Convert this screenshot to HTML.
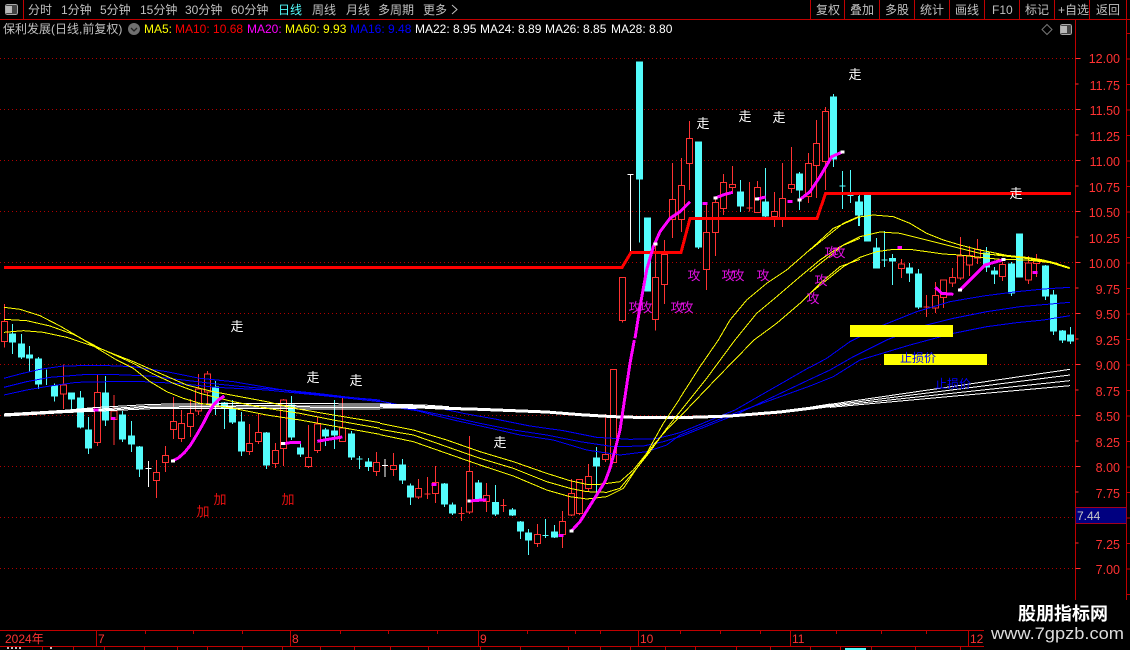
<!DOCTYPE html>
<html><head><meta charset="utf-8"><style>
html,body{margin:0;padding:0;background:#000;width:1130px;height:650px;overflow:hidden}
svg{display:block}
text{font-family:"Liberation Sans","WenQuanYi Zen Hei","Noto Sans CJK SC",sans-serif}
.t{font-size:12px;fill:#c0c0c0}
.ax{font-size:12.5px;fill:#ff3232;text-anchor:end}
.m{font-size:13px;text-anchor:middle}
.s{font-size:12px;text-anchor:middle}
</style></head><body>
<svg width="1130" height="650" viewBox="0 0 1130 650" xmlns="http://www.w3.org/2000/svg">
<rect width="1130" height="650" fill="#000"/>
<g shape-rendering="crispEdges">
<!-- grid -->
<path d="M0 58.5H1076M0 109.5H1076M0 160.5H1076M0 211.5H1076M0 262.5H1076M0 313.5H1076M0 364.5H1076M0 415.5H1076M0 466.5H1076M0 517.5H1076M0 568.5H1076" stroke="#b00000" stroke-dasharray="1 3" fill="none"/>
<!-- frame -->
<path d="M0 19.5H1130M23.5 0V19M810.5 0V19M844.5 0V19M879.5 0V19M914.5 0V19M949.5 0V19M984.5 0V19M1019.5 0V19M1054.5 0V19M1089.5 0V19M1126.5 0V650M1075.5 19V631M0 630.5H1076M0 646.5H1076" stroke="#c00000" fill="none"/>
<line x1="1078" y1="58" x2="1078" y2="570" stroke="#ff3232" stroke-width="5" stroke-dasharray="1 50"/>
<line x1="1077" y1="58" x2="1077" y2="570" stroke="#ff3232" stroke-width="3" stroke-dasharray="1 24.5"/>
<line x1="1128" y1="33" x2="1128" y2="600" stroke="#c00000" stroke-width="4" stroke-dasharray="1 24.5"/>
<path d="M96.5 631V646M290.5 631V646M478.5 631V646M638.5 631V646M790.5 631V646M968.5 631V646" stroke="#c00000"/>
<path d="M145.5 631V634M193.5 631V634M242.5 631V634M340.5 631V634M388.5 631V634M437.5 631V634M527.5 631V634M575.5 631V634M600.5 631V634M680.5 631V634M720.5 631V634M760.5 631V634M836.5 631V634M881.5 631V634M926.5 631V634" stroke="#c00000"/>
<path d="M42.5 646V650M73.5 646V650M104.5 646V650M144.5 646V650M177.5 646V650M207.5 646V650M242.5 646V650M282.5 646V650M320.5 646V650M354.5 646V650M390.5 646V650M428.5 646V650M480.5 646V650M520.5 646V650M568.5 646V650M600.5 646V650M630.5 646V650M665.5 646V650M695.5 646V650M736.5 646V650M770.5 646V650M810.5 646V650M840.5 646V650M871.5 646V650M915.5 646V650M960.5 646V650" stroke="#c00000"/>
<path d="M7 648H21M50 648H52" stroke="#c0c0c0" stroke-width="2" stroke-dasharray="2 2"/>
<rect x="845" y="648" width="21" height="2" fill="#54fcfc"/>

<!-- candles A -->
<g transform="translate(0 300) scale(.33333)" stroke-width="3">
<path fill="#000" stroke="#ff3232" d="M13 12V64M13 124V143M4 64H22V124H4ZM190 193V255M190 282V327M181 255H199V282H181ZM292 225V277M292 428V438M283 277H301V428H283ZM342 285V333M342 359V435M333 333H351V359H333ZM469 480V517M469 542V594M460 517H478V542H460ZM496 438V466M496 488V516M487 466H505V488H487ZM520 291V364M520 388V417M511 364H529V388H511ZM544 330V370M544 416V426M535 370H553V416H535ZM571 297V340M571 380V411M562 340H580V380H562ZM596 222V267M596 333V345M587 267H605V333H587ZM622 213V222M622 276V315M613 222H631V276H613ZM748 372V430M748 455V465M739 430H757V455H739ZM775 339V397M775 425V432M766 397H784V425H766ZM826 429V451M826 491V504M817 451H835V491H817ZM850 297V300M850 445V498M841 300H859V445H841ZM925 375V472M925 500V504M916 472H934V500H916ZM952 351V372M952 452V459M943 372H961V452H943ZM1027 294V384M1018 384H1036V425H1018ZM1129 456V487M1129 515V528M1120 487H1138V515H1120Z"/>
<path fill="#54fcfc" stroke="#54fcfc" d="M38 72V162M29 102H47V126H29ZM64 102V177M55 132H73V171H55ZM88 138V216M79 165H97V174H79ZM115 171V267M106 177H124V252H106ZM139 208V255M130 237H130ZM164 250V305M155 258H173V288H155ZM215 277V330M206 279H224V297H206ZM241 273V385M232 294H250V381H232ZM265 351V462M256 390H274V444H256ZM316 228V378M307 279H325V360H307ZM367 333V426M358 345H376V417H358ZM394 363V456M385 408H403V432H385ZM418 438V531M409 441H427V507H409ZM647 243V345M638 261H656V315H638ZM673 306V387M664 309H682V325H664ZM697 300V372M688 327H706V366H688ZM724 336V468M715 366H733V453H715ZM799 396V507M790 399H808V495H790ZM874 288V420M865 315H883V411H865ZM901 432V471M892 444H910V462H892ZM976 384V438M967 390H985V408H967ZM1003 300V447M994 393H1012V405H994ZM1054 393V480M1045 402H1063V471H1045ZM1078 468V507M1069 477H1087ZM1105 474V513M1096 486H1114V500H1096Z"/>
<path fill="none" stroke="#fff" d="M445 483V561M436 505H454"/>
</g>
<!-- candles B -->
<g transform="translate(380 340) scale(.33333)" stroke-width="3">
<path fill="none" stroke="#fff" d="M15 357V411M6 376H24"/>
<path fill="#000" stroke="#ff3232" d="M40 339V376M40 388V408M31 376H49V388H31ZM115 417V445M115 471V477M106 445H124V471H106ZM142 411V477M133 462H151ZM166 378V427M166 461V489M157 427H175V461H157ZM244 501V543M235 521H253ZM268 288V394M268 516V522M259 394H277V516H259ZM319 429V466M319 485V516M310 466H328V485H310ZM370 477V516M361 497H379ZM472 552V583M472 611V621M463 583H481V611H463ZM547 513V544M547 584V624M538 544H556V584H538ZM574 417V460M574 525V528M565 460H583V525H565ZM598 417V418M598 521V525M589 418H607V521H589ZM625 372V409M625 445V453M616 409H634V445H616ZM676 222V343M676 359V366M667 343H685V359H667ZM700 88V88M700 367V369M691 88H709V367H691Z"/>
<path fill="#54fcfc" stroke="#54fcfc" d="M67 357V432M58 375H76V420H58ZM91 430V495M82 438H100V471H82ZM193 429V501M184 432H202V492H184ZM217 487V525M208 495H226V519H208ZM295 420V483M286 429H304V480H286ZM346 435V528M337 487H355V522H337ZM397 504V528M388 510H406V525H388ZM421 543V597M412 546H430V573H412ZM445 567V645M436 579H454V600H436ZM496 537V594M487 586H505ZM523 555V594M514 576H532V591H514ZM649 321V460M640 354H658V378H640Z"/>
</g>
<!-- candles C -->
<g transform="translate(600 50) scale(.33333)" stroke-width="3">
<path fill="#000" stroke="#ff3232" d="M67 812V818M58 682H76V812H58ZM166 575V682M166 809V842M157 682H175V809H157ZM193 570V613M193 704V762M184 613H202V704H184ZM217 339V448M217 509V564M208 448H226V509H208ZM244 324V406M244 509V546M235 406H253V509H235ZM268 213V265M268 341V420M259 265H277V341H259ZM319 462V547M319 659V720M310 547H328V659H310ZM346 440V457M346 548V618M337 457H355V548H337ZM370 372V397M370 476V495M361 397H379V476H361ZM397 348V403M397 413V430M388 403H406V413H388ZM448 396V485M439 474H457ZM472 393V412M463 412H481V488H463ZM523 426V484M523 500V531M514 484H532V500H514ZM547 339V445M547 503V531M538 445H556V503H538ZM574 291V403M574 416V429M565 403H583V416H565ZM625 309V340M625 440V459M616 340H634V440H616ZM649 210V280M649 347V444M640 280H658V347H640ZM676 171V184M676 335V420M667 184H685V335H667Z"/>
<path fill="none" stroke="#fff" d="M92 372V607M82 373H100"/>
<path fill="#54fcfc" stroke="#54fcfc" d="M118 36V578M109 36H127V387H109ZM142 504V723M133 504H151V723H133ZM295 276V597M286 276H304V591H286ZM421 390V486M412 426H430V468H412ZM496 354V501M487 456H505V498H487ZM598 366V480M589 372H607V420H589ZM700 132V351M691 141H709V327H691ZM727 363V477M718 408H736ZM751 360V459M742 437H760ZM775 438V528M766 456H784V495H766Z"/>
</g>
<!-- candles D -->
<g transform="translate(810 170) scale(.33333)" stroke-width="3">
<path fill="#000" stroke="#ff3232" d="M274 267V282M274 296V324M265 282H283V296H265ZM349 375V441M340 411H358ZM376 336V376M376 414V429M367 376H385V414H367ZM400 330V330M400 382V414M391 330H409V382H391ZM427 294V322M427 339V351M418 322H436V339H418ZM451 201V258M451 324V330M442 258H460V324H442ZM478 228V256M478 285V318M469 256H487V285H469ZM502 207V238M502 264V282M493 238H511V264H493ZM577 276V283M577 320V333M568 283H586V320H568ZM655 258V279M655 330V342M646 279H664V330H646ZM679 252V267M679 280V321M670 267H688V280H670Z"/>
<path fill="#54fcfc" stroke="#54fcfc" d="M172 75V213M163 75H181V213H163ZM199 204V294M190 234H208V294H190ZM223 183V291M214 270H232ZM247 252V345M238 265H256V273H238ZM298 279V336M289 294H307V309H289ZM325 297V417M316 312H334V411H316ZM529 231V306M520 249H538V291H520ZM553 291V342M544 303H562V312H544ZM604 276V378M595 282H613V369H595ZM628 192V321M619 192H637V321H619ZM706 285V390M697 288H715V378H697ZM730 360V495M721 375H739V483H721ZM757 480V519M748 483H766V510H748ZM781 471V522M772 495H790V513H772Z"/>
<path d="M148 75V168M139 96H157V135H139Z" fill="#54fcfc" stroke="#54fcfc"/>
</g>

<!-- yellow and blue and white lines: left -->
<g transform="translate(0 300) scale(.33333)" fill="none" stroke-width="3">
<polyline stroke="#0000ff" points="12,235 60,222 120,208 190,198 300,196 400,200 500,215 600,235 700,245 800,262 900,278 1000,288 1140,300"/>
<polyline stroke="#0000ff" points="12,262 80,245 150,232 250,224 350,224 450,228 550,240 650,252 750,262 850,270 950,280 1050,292 1140,302"/>
<polyline stroke="#0000ff" points="12,285 80,270 150,258 230,247 330,245 430,245 530,250 650,262 800,270 900,280 1000,290 1140,305"/>
<polyline stroke="#fff" stroke-width="10" points="12,345 150,337 280,329"/>
<polyline stroke="#fff" points="12,344 150,335 280,323 456,313 800,310 1140,312"/>
<polyline stroke="#fff" points="12,345 150,336 280,328 456,318 800,317 1140,318"/>
<polyline stroke="#fff" points="12,346 150,338 280,331 456,322 800,321 1140,323"/>
<polyline stroke="#fff" points="12,348 150,340 280,334 456,326 800,326 1140,327"/>
<polyline stroke="#ffff00" points="12,22 60,28 120,47 180,78 240,113 300,150 350,180 400,205 450,245 500,275 550,295 600,310 700,325 800,345 900,360 1000,378 1140,403"/>
<polyline stroke="#ffff00" points="12,58 80,62 150,78 220,103 300,145 400,190 460,222 520,250 600,280 700,305 800,325 900,340 1000,360 1140,385"/>
<polyline stroke="#ffff00" points="12,97 70,92 130,97 200,112 290,142 400,185 480,220 560,255 640,275 720,290 800,305 900,328 1000,345 1140,368"/>
</g>
<g transform="translate(380 340) scale(.33333)" fill="none" stroke-width="3">
<polyline stroke="#0000ff" points="0,183 60,195 180,205 250,220 350,238 450,258 550,272 650,292 750,298 830,296 900,278"/>
<polyline stroke="#0000ff" points="0,190 100,208 200,228 300,250 400,270 500,285 600,305 700,320 790,318 850,305 900,290"/>
<polyline stroke="#0000ff" points="0,195 110,212 220,240 320,262 420,285 520,300 620,330 720,345 800,335 860,315 900,285"/>
<polyline stroke="#fff" points="0,192 130,195 207,200"/>
<polyline stroke="#fff" points="0,204 110,205"/>
<polyline stroke="#fff" stroke-width="9" points="0,197 100,200 200,205 300,208 400,212 500,216 600,224 700,230 800,233 900,233"/>
<polyline stroke="#ffff00" points="0,250 100,270 200,300 300,335 400,365 500,400 570,422 620,433 660,433 720,425 760,390 800,340 850,250 900,175"/>
<polyline stroke="#ffff00" points="0,268 100,285 200,320 300,355 400,385 500,425 570,445 620,455 680,457 720,445 770,385 810,335 860,265 900,215"/>
<polyline stroke="#ffff00" points="0,284 100,305 200,340 300,375 400,408 500,450 570,470 620,477 680,470 730,445 770,385 820,315 860,270 900,230"/>
</g>
<!-- bridge -->
<g fill="none">
<polyline stroke="#0000ff" points="680,432.7 735,410 810,367"/>
<polyline stroke="#0000ff" points="680,436.7 735,415 810,379.3"/>
<polyline stroke="#0000ff" points="680,435 735,413 810,386"/>
<polyline stroke="#fff" stroke-width="3" points="680,417.7 730,416 780,412 810,408.3 830,405"/>
</g>
<g transform="translate(600 50) scale(.33333)" fill="none" stroke="#ffff00" stroke-width="3">
<polyline points="240,1044 300,950 355,870 390,810 440,750 500,700 560,660 640,590 700,535 780,500"/>
<polyline points="240,1085 320,985 405,870 470,790 530,740 600,680 660,630 720,590 780,565"/>
<polyline points="240,1100 350,985 462,870 530,820 600,760 660,700 720,650 780,628"/>
</g>
<g transform="translate(810 170) scale(.33333)" fill="none" stroke-width="3">
<polyline stroke="#0000ff" points="0,592 50,565 120,515 220,465 320,425 420,395 520,378 620,365 700,357 780,352"/>
<polyline stroke="#0000ff" points="0,628 60,600 130,560 230,510 330,470 430,445 530,425 630,410 780,397"/>
<polyline stroke="#0000ff" points="0,648 70,620 150,570 300,525 430,490 530,470 620,458 700,450 780,437"/>
<polyline stroke="#fff" stroke-width="9" points="0,715 60,707"/>
<polyline stroke="#fff" points="60,703 780,598"/>
<polyline stroke="#fff" points="60,706 780,615"/>
<polyline stroke="#fff" points="60,709 780,632"/>
<polyline stroke="#fff" points="60,712 780,647"/>
<polyline stroke="#ffff00" points="0,240 50,200 100,160 140,142 190,135 250,140 300,160 350,190 400,210 450,225 500,238 550,248 600,258 650,262 700,270 740,280 780,295"/>
<polyline stroke="#ffff00" points="0,305 50,265 100,225 150,200 210,186 270,190 330,205 390,220 450,235 510,250 570,256 630,262 700,272 780,295"/>
<polyline stroke="#ffff00" points="0,370 50,330 100,290 150,262 200,245 250,238 300,238 350,245 400,252 450,255 510,262 570,268 650,270 720,278 780,295"/>
<polyline stroke="#ffff00" stroke-width="6" points="560,254 650,264 720,276 778,294"/>
</g>

<!-- thick red -->
<polyline fill="none" stroke="#ff0000" stroke-width="3" points="4,267.5 622,267.5 631,252.5 681,252.5 690,218.5 817,218.5 825.5,193.5 1071,193.5"/>

<!-- yellow bars -->
<rect x="850" y="325" width="103" height="12" fill="#ffff00"/>
<rect x="884" y="354" width="103" height="11" fill="#ffff00"/>

<!-- magenta -->
<g transform="translate(0 300) scale(.33333)" fill="none" stroke="#ff00ff" stroke-width="9">
<polyline points="517,483 535,474 553,458 571,436 590,405 610,370 625,340 640,316 655,300 673,288"/>
<polyline points="850,431 870,428 903,427"/>
<polyline points="952,424 985,418 1027,411"/>
<path d="M281 330H295M333 355H347"/>
<path d="M513 483H525M843 431H855" stroke="#fff"/>
</g>
<g transform="translate(380 340) scale(.33333)" fill="none" stroke="#ff00ff" stroke-width="9">
<polyline points="268,483 320,479"/>
<path d="M155 433H169M536 586H550"/>
<polyline points="574,573 600,545 625,505 650,465 675,425 690,385 705,330 720,270 735,170 750,70 763,0"/>
<path d="M568 573H580M262 483H272" stroke="#fff"/>
</g>
<g transform="translate(600 50) scale(.33333)" fill="none" stroke="#ff00ff" stroke-width="9">
<polyline points="105,865 120,770 140,660 160,590 180,545 210,505 240,485 270,455"/>
<polyline points="345,444 375,433 398,427"/>
<polyline points="470,447 497,441"/>
<polyline points="598,450 630,425 660,380 695,320 727,306"/>
<path d="M308 460H322M563 454H577"/>
<path d="M160 582H172M340 444H352M465 447H477M592 450H604M721 306H733" stroke="#fff"/>
</g>
<g transform="translate(810 170) scale(.33333)" fill="none" stroke="#ff00ff" stroke-width="9">
<path d="M263 232H276M668 307H682"/>
<polyline points="376,352 395,370 430,373"/>
<polyline points="450,360 490,320 525,285 580,269"/>
<path d="M444 360H456M574 269H586" stroke="#fff"/>
</g>

<!-- price box -->
<rect x="1075.5" y="507.5" width="51" height="16" fill="#000080" stroke="#a00020"/>
<!-- icons -->
<rect x="5.5" y="4.5" width="12" height="10" rx="2" fill="#444" stroke="#a8a8a8"/>
<rect x="6" y="6" width="6" height="7" fill="#b8b8b8"/>
<rect x="1060.5" y="24.5" width="11" height="10" rx="2" fill="#444" stroke="#a8a8a8"/>
<rect x="1061" y="26" width="6" height="7" fill="#b8b8b8"/>
</g>
<path d="M1047 24.5L1052 29.5L1047 34.5L1042 29.5Z" fill="none" stroke="#777"/>
<circle cx="134" cy="29" r="6" fill="#707070"/>
<path d="M131 28L134 31L137 28" fill="none" stroke="#222" stroke-width="1.3"/>
<path d="M452 5L457 9.5L452 14" fill="none" stroke="#c0c0c0"/>

<!-- toolbar text -->
<g class="t">
<text class="t" x="28" y="14">分时</text>
<text class="t" x="61" y="14">1分钟</text>
<text class="t" x="100" y="14">5分钟</text>
<text class="t" x="140" y="14">15分钟</text>
<text class="t" x="185" y="14">30分钟</text>
<text class="t" x="231" y="14">60分钟</text>
<text class="t" x="278" y="14" style="fill:#54fcfc">日线</text>
<text class="t" x="312" y="14">周线</text>
<text class="t" x="346" y="14">月线</text>
<text class="t" x="378" y="14">多周期</text>
<text class="t" x="423" y="14">更多</text>
<text class="t" x="816" y="14">复权</text>
<text class="t" x="850" y="14">叠加</text>
<text class="t" x="885" y="14">多股</text>
<text class="t" x="920" y="14">统计</text>
<text class="t" x="955" y="14">画线</text>
<text class="t" x="992" y="14">F10</text>
<text class="t" x="1025" y="14">标记</text>
<text class="t" x="1058" y="14">+自选</text>
<text class="t" x="1096" y="14">返回</text>
<text class="t" x="3" y="33">保利发展(日线,前复权)</text>
<text class="t" x="144" y="33" style="fill:#ffff00">MA5:</text>
<text class="t" x="175" y="33" style="fill:#ff0000">MA10: 10.68</text>
<text class="t" x="247" y="33" style="fill:#ff00ff">MA20:</text>
<text class="t" x="285" y="33" style="fill:#ffff00">MA60: 9.93</text>
<text class="t" x="350" y="33" style="fill:#0000ff">MA16: 9.48</text>
<text class="t" x="415" y="33" style="fill:#fff">MA22: 8.95</text>
<text class="t" x="480" y="33" style="fill:#fff">MA24: 8.89</text>
<text class="t" x="545" y="33" style="fill:#fff">MA26: 8.85</text>
<text class="t" x="611" y="33" style="fill:#fff">MA28: 8.80</text>
</g>

<!-- axis labels -->
<text class="ax" x="1120" y="63">12.00</text>
<text class="ax" x="1120" y="90">11.75</text>
<text class="ax" x="1120" y="115">11.50</text>
<text class="ax" x="1120" y="141">11.25</text>
<text class="ax" x="1120" y="166">11.00</text>
<text class="ax" x="1120" y="192">10.75</text>
<text class="ax" x="1120" y="217">10.50</text>
<text class="ax" x="1120" y="243">10.25</text>
<text class="ax" x="1120" y="268">10.00</text>
<text class="ax" x="1120" y="294">9.75</text>
<text class="ax" x="1120" y="319">9.50</text>
<text class="ax" x="1120" y="345">9.25</text>
<text class="ax" x="1120" y="370">9.00</text>
<text class="ax" x="1120" y="396">8.75</text>
<text class="ax" x="1120" y="421">8.50</text>
<text class="ax" x="1120" y="447">8.25</text>
<text class="ax" x="1120" y="472">8.00</text>
<text class="ax" x="1120" y="498">7.75</text>
<text class="ax" x="1120" y="549">7.25</text>
<text class="ax" x="1120" y="574">7.00</text>
<text x="1077" y="520" font-size="12" fill="#c8c8c8">7.44</text>

<!-- date labels -->
<g font-size="12" fill="#ff3232">
<text x="5" y="643">2024年</text>
<text x="98" y="643">7</text>
<text x="292" y="643">8</text>
<text x="480" y="643">9</text>
<text x="640" y="643">10</text>
<text x="792" y="643">11</text>
<text x="970" y="643">12</text>
</g>

<!-- chart labels -->
<g class="m" fill="#fff">
<text class="m" x="237" y="331">走</text>
<text class="m" x="313" y="382">走</text>
<text class="m" x="356" y="385">走</text>
<text class="m" x="500" y="447">走</text>
<text class="m" x="703" y="128">走</text>
<text class="m" x="745" y="121">走</text>
<text class="m" x="779" y="122">走</text>
<text class="m" x="855" y="79">走</text>
<text class="m" x="1016" y="198">走</text>
</g>
<g class="m" fill="#e81010">
<text class="m" x="203" y="516">加</text>
<text class="m" x="220" y="504">加</text>
<text class="m" x="288" y="504">加</text>
</g>
<g class="m" fill="#e010e0">
<text class="m" x="635" y="312">攻</text>
<text class="m" x="646" y="312">攻</text>
<text class="m" x="677" y="312">攻</text>
<text class="m" x="687" y="312">攻</text>
<text class="m" x="694" y="280">攻</text>
<text class="m" x="728" y="280">攻</text>
<text class="m" x="738" y="280">攻</text>
<text class="m" x="763" y="280">攻</text>
<text class="m" x="831" y="257">攻</text>
<text class="m" x="839" y="257">攻</text>
<text class="m" x="821" y="285">攻</text>
<text class="m" x="813" y="303">攻</text>
</g>
<text class="s" x="918" y="362" fill="#0000ff">止损价</text>
<text class="s" x="953" y="388" fill="#0000ff">止损价</text>

<!-- watermark -->
<rect x="984" y="600" width="146" height="50" fill="#000"/>
<path d="M1075.5 590V600M1126.5 590V600" stroke="#c00000" shape-rendering="crispEdges"/>
<text x="1018" y="620" font-size="18" font-weight="700" fill="#fff" style="font-family:'Noto Sans CJK SC',sans-serif">股朋指标网</text>
<text x="991" y="639" font-size="17" fill="#ddd" textLength="133" lengthAdjust="spacingAndGlyphs">www.7gpzb.com</text>
</svg>
</body></html>
